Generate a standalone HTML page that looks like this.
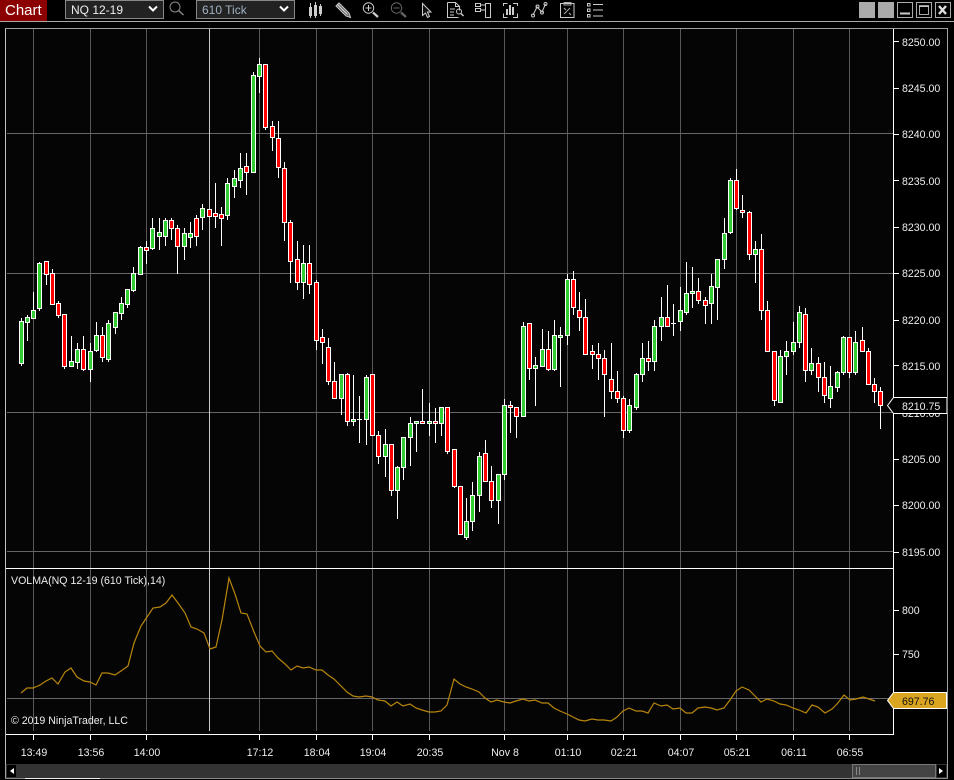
<!DOCTYPE html>
<html>
<head>
<meta charset="utf-8">
<title>Chart</title>
<style>
html,body{margin:0;padding:0;background:#000;width:954px;height:780px;overflow:hidden}
svg{display:block;position:absolute;left:0;top:0}
text{font-family:"Liberation Sans",Arial,sans-serif;font-size:10.6px;fill:#ededed}
</style>
</head>
<body>
<svg width="954" height="780" viewBox="0 0 954 780" xmlns="http://www.w3.org/2000/svg">
<rect width="954" height="780" fill="#000"/>
<rect x="6" y="29" width="887" height="705" fill="#050505"/>

<!-- Toolbar -->
<rect x="0" y="0" width="47" height="21" fill="#8b0000"/>
<text x="5" y="15" style="font-size:15px;fill:#fff">Chart</text>
<rect x="65.500" y="0.500" width="98" height="18" fill="#222" stroke="#888"/>
<text x="71" y="14" style="font-size:12px;fill:#eee">NQ 12-19</text>
<path d="M149 6.500l4 4 4-4" fill="none" stroke="#fff" stroke-width="2"/>
<rect x="196.500" y="0.500" width="98" height="18" fill="#222" stroke="#888"/>
<text x="202" y="14" style="font-size:12px;fill:#9fb0c0">610 Tick</text>
<path d="M280 6.500l4 4 4-4" fill="none" stroke="#fff" stroke-width="2"/>
<!-- search -->
<g fill="none" stroke="#888"><circle cx="175" cy="7" r="5"/><path d="M178.500 10.500l5 4.500" stroke-width="1.500"/></g>
<!-- candle icon -->
<g fill="#ccc" stroke="none"><path d="M310 3h1v15h-1zM315 2h1v16h-1zM320 4h1v12h-1z"/><rect x="309" y="7" width="3" height="9"/><rect x="314" y="5" width="3" height="11"/><rect x="319" y="6" width="3" height="8"/></g>
<!-- pencil -->
<g fill="none" stroke="#ccc"><path d="M336 6l3-3 10 10 1.500 4.500-4.500-1.500z" fill="#666"/><path d="M337.500 4.500l10 10" stroke="#ddd"/></g>
<!-- zoom in -->
<g fill="none" stroke="#ccc"><circle cx="368.500" cy="8" r="5.200"/><path d="M365.500 8h6M368.500 5v6"/><path d="M373 12.500l5 4.500" stroke-width="2.200"/></g>
<!-- zoom out -->
<g fill="none" stroke="#666"><circle cx="396.500" cy="8" r="5.200"/><path d="M393.500 8h6"/><path d="M401 12.500l5 4.500" stroke-width="2.200"/></g>
<!-- arrow -->
<path d="M422.500 3.500v12l3-2.500 2 4.500 2-1-2-4.500h3.500z" fill="#111" stroke="#ccc"/>
<!-- doc search -->
<g fill="none" stroke="#ccc"><path d="M447.500 2.500h8l4 4v4M447.500 2.500v15h11M455.500 2.500v4h4M450 9h5M450 12h4M450 15h4"/><circle cx="459" cy="11.500" r="2.500"/><path d="M461 13.500l2.500 2.500" stroke-width="1.500"/></g>
<!-- panels -->
<g fill="none" stroke="#ccc"><rect x="475.500" y="3.500" width="5" height="3"/><rect x="475.500" y="8.500" width="5" height="3"/><path d="M480.500 5h5M480.500 10h5"/><rect x="485.500" y="3.500" width="5" height="14"/></g>
<!-- bars in brackets -->
<g fill="none" stroke="#ccc"><path d="M503.500 6V3.500h4M513 3.500h4.500V6M503.500 13.500v4h4M513 17.500h4.500v-4"/></g>
<path d="M506 9h2v6h-2zM509 5h2v10h-2zM512 7h2v8h-2z" fill="#ccc"/>
<!-- line nodes -->
<g fill="none" stroke="#ccc"><path d="M533 15l4-8 5 5 3.500-8"/><circle cx="533" cy="15.500" r="1.500"/><circle cx="537.500" cy="6.500" r="1.500"/><circle cx="542" cy="12.500" r="1.500"/><circle cx="545.500" cy="4" r="1.500"/></g>
<!-- clipboard -->
<g fill="none" stroke="#ccc"><path d="M560.500 3.500h13.500v14h-13.500z"/><path d="M564 5h7v-2.500h-7zM564 14l6-6M564 8l2 2M569 13l2 2" stroke="#aaa"/></g>
<!-- list -->
<g fill="none" stroke="#ccc"><rect x="587.500" y="3.500" width="2.500" height="2.500"/><rect x="587.500" y="9" width="2.500" height="2.500"/><rect x="587.500" y="14.500" width="2.500" height="2.500"/><path d="M593 4.500h10M593 10h10M593 16h10"/></g>
<!-- window buttons -->
<rect x="859" y="2" width="16" height="16" fill="#aaa"/>
<rect x="878" y="2" width="16" height="16" fill="#aaa"/>
<g fill="none" stroke="#aaa"><rect x="897.500" y="2.500" width="15" height="15"/><rect x="916.500" y="2.500" width="15" height="15"/><rect x="935.500" y="2.500" width="15" height="15"/></g>
<path d="M900 13.500h10" stroke="#ccc" stroke-width="2"/>
<path d="M919.500 6.500h9v8h-9z" fill="none" stroke="#aaa" stroke-width="1"/><path d="M919 6h10" stroke="#ccc" stroke-width="1.500"/>
<path d="M939 6l7 8M946 6l-7 8" stroke="#ddd" stroke-width="2.400"/>
<path d="M0 21.500h954" stroke="#aaa"/>

<!-- Grid -->
<g stroke="#585858" fill="none">
<path d="M33.500 29V731M90.500 29V731M146.500 29V731M259.500 29V731M316.500 29V731M372.500 29V731M429.500 29V731M504.500 29V731M567.500 29V731M623.500 29V731M680.500 29V731M736.500 29V731M793.500 29V731M849.500 29V731"/>
<path d="M7 133.500H893M7 273.500H893M7 412.500H893M7 551.500H893M7 698.500H893" stroke="#666"/>
</g>
<path d="M209.500 29V731" stroke="#c8c8c8"/>

<!-- Wicks -->
<path fill="none" stroke="#fff" d="M21.500 318V366M27.500 315V341M33.500 292V318M39.500 262V311M46.500 261V285M52.500 269V304M58.500 301V318M64.500 314V369M71.500 336V366M77.500 343V369M83.500 336V371M90.500 343V382M96.500 322V352M102.500 327V362M108.500 320V362M115.500 312V334M121.500 297V320M127.500 289V308M133.500 267V292M140.500 246V274M146.500 241V264M152.500 218V250M159.500 218V250M165.500 218V246M171.500 218V240M177.500 225V274M184.500 228V260M190.500 222V248M196.500 215V246M202.500 204V230M215.500 183V228M221.500 207V246M227.500 178V220M234.500 170V198M240.500 153V188M246.500 153V195M253.500 72V172M259.500 58V93M265.500 64V130M272.500 121V151M278.500 121V178M284.500 162V241M290.500 220V283M297.500 241V290M303.500 245V299M309.500 245V294M316.500 280V350M322.500 329V364M328.500 338V385M334.500 362V399M341.500 374V415M347.500 373V426M353.500 375V426M359.500 396V443M357 419.500h5M366.500 375V445M372.500 374V435M378.500 431V464M385.500 429V477M391.500 444V496M397.500 466V519M403.500 437V480M410.500 417V466M416.500 421V452M422.500 389V423M429.500 403V436M435.500 408V443M441.500 407V436M447.500 407V454M454.500 449V488M460.500 486V534M466.500 498V540M472.500 482V531M479.500 452V512M485.500 440V481M491.500 466V508M498.500 474V524M504.500 399V480M510.500 401V433M516.500 407V438M523.500 322V417M529.500 323V380M535.500 357V406M542.500 329V366M548.500 331V371M554.500 320V371M560.500 327V387M567.500 274V345M573.500 271V315M579.500 292V331M585.500 299V355M592.500 345V369M598.500 343V380M604.500 350V417M611.500 343V399M617.500 371V403M623.500 396V438M629.500 399V433M636.500 373V410M642.500 343V382M648.500 341V371M654.500 320V371M661.500 297V341M667.500 285V327M673.500 304V336M671 323.500h5M680.500 287V331M686.500 262V315M692.500 267V308M698.500 278V304M705.500 297V324M711.500 274V324M717.500 259V320M724.500 218V269M730.500 178V234M736.500 169V210M742.500 195V218M749.500 211V260M755.500 241V283M761.500 234V320M767.500 301V352M774.500 351V406M780.500 350V403M786.500 341V375M793.500 322V355M799.500 306V348M805.500 308V382M811.500 348V375M818.500 357V392M824.500 362V403M830.500 366V408M837.500 371V392M843.500 336V375M849.500 337V378M855.500 331V375M862.500 327V352M868.500 348V385M874.500 378V403M880.500 387V429"/>

<!-- Green bodies -->
<path fill="#32cd32" stroke="#fff" d="M19.500 321.500h4V363.500h-4zM25.500 317.500h4V322.500h-4zM31.500 310.500h4V318.500h-4zM37.500 263.500h4V308.500h-4zM69.500 361.500h4V366.500h-4zM75.500 349.500h4V362.500h-4zM88.500 351.500h4V369.500h-4zM94.500 335.500h4V350.500h-4zM106.500 323.500h4V359.500h-4zM113.500 312.500h4V327.500h-4zM119.500 303.500h4V313.500h-4zM125.500 289.500h4V304.500h-4zM131.500 273.500h4V290.500h-4zM138.500 247.500h4V274.500h-4zM150.500 228.500h4V248.500h-4zM157.500 232.500h4V236.500h-4zM163.500 220.500h4V236.500h-4zM182.500 233.500h4V246.500h-4zM188.500 233.500h4V237.500h-4zM200.500 208.500h4V217.500h-4zM225.500 183.500h4V215.500h-4zM232.500 178.500h4V186.500h-4zM238.500 168.500h4V180.500h-4zM251.500 75.500h4V172.500h-4zM257.500 64.500h4V76.500h-4zM301.500 263.500h4V282.500h-4zM339.500 374.500h4V398.500h-4zM351.500 419.500h4V421.500h-4zM364.500 377.500h4V419.500h-4zM383.500 444.500h4V456.500h-4zM395.500 467.500h4V490.500h-4zM401.500 437.500h4V467.500h-4zM408.500 423.500h4V437.500h-4zM414.500 421.500h4V423.500h-4zM427.500 421.500h4V423.500h-4zM439.500 407.500h4V423.500h-4zM464.500 521.500h4V537.500h-4zM470.500 495.500h4V521.500h-4zM477.500 456.500h4V495.500h-4zM496.500 474.500h4V500.500h-4zM502.500 405.500h4V474.500h-4zM521.500 326.500h4V416.500h-4zM533.500 365.500h4V368.500h-4zM540.500 349.500h4V366.500h-4zM552.500 335.500h4V369.500h-4zM558.500 335.500h4V337.500h-4zM565.500 279.500h4V335.500h-4zM627.500 405.500h4V430.500h-4zM634.500 374.500h4V407.500h-4zM640.500 358.500h4V374.500h-4zM652.500 326.500h4V361.500h-4zM659.500 317.500h4V326.500h-4zM678.500 310.500h4V321.500h-4zM684.500 293.500h4V312.500h-4zM690.500 291.500h4V293.500h-4zM709.500 286.500h4V303.500h-4zM715.500 259.500h4V287.500h-4zM722.500 233.500h4V259.500h-4zM728.500 180.500h4V232.500h-4zM753.500 249.500h4V254.500h-4zM778.500 356.500h4V402.500h-4zM784.500 351.500h4V356.500h-4zM791.500 342.500h4V351.500h-4zM797.500 312.500h4V342.500h-4zM809.500 363.500h4V370.500h-4zM828.500 386.500h4V398.500h-4zM835.500 372.500h4V387.500h-4zM841.500 337.500h4V372.500h-4zM853.500 342.500h4V372.500h-4z"/>

<!-- Red bodies -->
<path fill="#f00" stroke="#fff" d="M44.500 261.500h4V274.500h-4zM50.500 273.500h4V304.500h-4zM56.500 303.500h4V315.500h-4zM62.500 314.500h4V366.500h-4zM81.500 349.500h4V369.500h-4zM100.500 335.500h4V357.500h-4zM144.500 247.500h4V250.500h-4zM169.500 220.500h4V228.500h-4zM175.500 228.500h4V246.500h-4zM194.500 218.500h4V236.500h-4zM207.500 209.500h4V216.500h-4zM213.500 213.500h4V216.500h-4zM219.500 214.500h4V218.500h-4zM244.500 166.500h4V172.500h-4zM263.500 64.500h4V127.500h-4zM270.500 126.500h4V137.500h-4zM276.500 138.500h4V167.500h-4zM282.500 168.500h4V222.500h-4zM288.500 222.500h4V261.500h-4zM295.500 259.500h4V282.500h-4zM307.500 263.500h4V284.500h-4zM314.500 282.500h4V340.500h-4zM320.500 337.500h4V342.500h-4zM326.500 347.500h4V381.500h-4zM332.500 381.500h4V398.500h-4zM345.500 374.500h4V421.500h-4zM370.500 374.500h4V435.500h-4zM376.500 435.500h4V456.500h-4zM389.500 444.500h4V490.500h-4zM420.500 421.500h4V423.500h-4zM433.500 421.500h4V423.500h-4zM445.500 407.500h4V451.500h-4zM452.500 449.500h4V486.500h-4zM458.500 486.500h4V534.500h-4zM483.500 453.500h4V481.500h-4zM489.500 481.500h4V500.500h-4zM508.500 405.500h4V407.500h-4zM514.500 407.500h4V416.500h-4zM527.500 323.500h4V368.500h-4zM546.500 349.500h4V369.500h-4zM571.500 279.500h4V307.500h-4zM577.500 310.500h4V317.500h-4zM583.500 317.500h4V354.500h-4zM590.500 351.500h4V354.500h-4zM596.500 354.500h4V358.500h-4zM602.500 358.500h4V374.500h-4zM609.500 379.500h4V391.500h-4zM615.500 391.500h4V398.500h-4zM621.500 398.500h4V430.500h-4zM646.500 358.500h4V361.500h-4zM665.500 317.500h4V326.500h-4zM696.500 291.500h4V300.500h-4zM703.500 300.500h4V305.500h-4zM734.500 180.500h4V208.500h-4zM740.500 210.500h4V212.500h-4zM747.500 212.500h4V254.500h-4zM759.500 249.500h4V310.500h-4zM765.500 310.500h4V351.500h-4zM772.500 351.500h4V400.500h-4zM803.500 314.500h4V370.500h-4zM816.500 363.500h4V377.500h-4zM822.500 377.500h4V395.500h-4zM847.500 337.500h4V372.500h-4zM860.500 340.500h4V351.500h-4zM866.500 351.500h4V384.500h-4zM872.500 384.500h4V391.500h-4zM878.500 391.500h4V405.500h-4z"/>

<!-- VOLMA line -->
<polyline fill="none" stroke="#b8860b" stroke-width="1.200" points="21,693 27,688 33,688 40,685 46,681 52,678 58,684 65,672 71,668 77,677 84,681 90,682 96,685 102,673 108,673 115,675 121,671 128,666 134,643 141,626 147,617 153,608 160,607 166,603 172,595 178,603 185,613 191,627 197,629 204,633 210,649 216,647 222,620 229,578 235,594 241,613 247,614 254,632 260,646 266,652 272,651 278,658 285,664 291,670 297,666 303,668 309,667 316,670 322,670 328,675 334,679 341,686 347,692 353,696 359,697 366,696 372,697 378,700 385,701 391,706 397,702 403,706 410,704 416,708 422,710 429,712 435,712 441,711 447,705 454,679 460,684 466,687 472,689 479,692 485,698 491,702 497,700 504,702 510,703 516,701 523,699 529,701 535,700 542,703 548,703 554,708 560,711 567,714 573,717 579,720 585,721 592,719 598,720 604,720 611,721 617,717 623,711 629,708 636,711 642,711 648,713 654,703 661,706 667,705 673,709 680,708 686,713 692,713 698,708 705,707 711,708 717,710 724,708 730,700 736,691 742,687 749,690 755,696 761,702 767,699 774,701 780,704 786,705 793,708 799,710 806,713 812,705 818,707 825,713 832,709 837,704 844,695 850,700 856,699 863,697 869,699 875,701"/>

<!-- Frames -->
<g fill="none">
<path d="M5.500 778V28.500H947.500V778" stroke="#a0a0a0"/>
<path d="M5.500 28.500V764" stroke="#c0c0c0"/>
<path d="M893.500 29V734.500H6M6 568.500H893" stroke="#fff"/>
<path d="M5 778.500H948" stroke="#888"/>
<path d="M25 778.500H100" stroke="#eee"/>
</g>

<!-- Panel labels -->
<text x="11" y="584">VOLMA(NQ 12-19 (610 Tick),14)</text>
<text x="11" y="724">© 2019 NinjaTrader, LLC</text>

<!-- Y axis -->
<path stroke="#fff" d="M894 41.500h5M894 88.500h5M894 134.500h5M894 180.500h5M894 227.500h5M894 273.500h5M894 320.500h5M894 365.500h5M894 412.500h5M894 459.500h5M894 505.500h5M894 552.500h5M894 610.500h5M894 654.500h5"/>
<text x="902" y="46">8250.00</text>
<text x="902" y="92">8245.00</text>
<text x="902" y="138">8240.00</text>
<text x="902" y="185">8235.00</text>
<text x="902" y="231">8230.00</text>
<text x="902" y="277">8225.00</text>
<text x="902" y="324">8220.00</text>
<text x="902" y="370">8215.00</text>
<text x="902" y="417">8210.00</text>
<text x="902" y="463">8205.00</text>
<text x="902" y="509">8200.00</text>
<text x="902" y="556">8195.00</text>
<text x="902" y="614">800</text>
<text x="902" y="658">750</text>

<!-- Price tags -->
<path d="M887.500 405.500L893.500 397.500H946.500V413.500H893.500z" fill="#000" stroke="#fff"/>
<rect x="946" y="398" width="2" height="15" fill="#888"/>
<text x="902" y="410">8210.75</text>
<path d="M887.500 700.500L893.500 692.500H946.500V708.500H893.500z" fill="#daa520" stroke="#fff"/>
<text x="902" y="705" style="fill:#111">697.76</text>

<!-- X axis -->
<path stroke="#fff" d="M33.500 735v5M90.500 735v5M146.500 735v5M259.500 735v5M316.500 735v5M372.500 735v5M429.500 735v5M504.500 735v5M567.500 735v5M623.500 735v5M680.500 735v5M736.500 735v5M793.500 735v5M849.500 735v5"/>
<g text-anchor="middle">
<text x="34" y="756">13:49</text>
<text x="91" y="756">13:56</text>
<text x="147" y="756">14:00</text>
<text x="260" y="756">17:12</text>
<text x="317" y="756">18:04</text>
<text x="373" y="756">19:04</text>
<text x="430" y="756">20:35</text>
<text x="505" y="756">Nov 8</text>
<text x="568" y="756">01:10</text>
<text x="624" y="756">02:21</text>
<text x="681" y="756">04:07</text>
<text x="737" y="756">05:21</text>
<text x="794" y="756">06:11</text>
<text x="850" y="756">06:55</text>
</g>

<!-- Scrollbar -->
<rect x="6" y="764" width="941" height="14" fill="#333"/>
<rect x="7" y="765" width="9" height="12" fill="#000"/>
<path d="M10 771l4-3v6z" fill="#fff"/>
<rect x="852.500" y="764.500" width="83" height="13" fill="#444" stroke="#777"/>
<path d="M856.500 767v8M859.500 767v8" stroke="#888"/>
<rect x="937" y="765" width="9" height="12" fill="#000"/>
<path d="M943 771l-4-3v6z" fill="#fff"/>
</svg>
</body>
</html>
